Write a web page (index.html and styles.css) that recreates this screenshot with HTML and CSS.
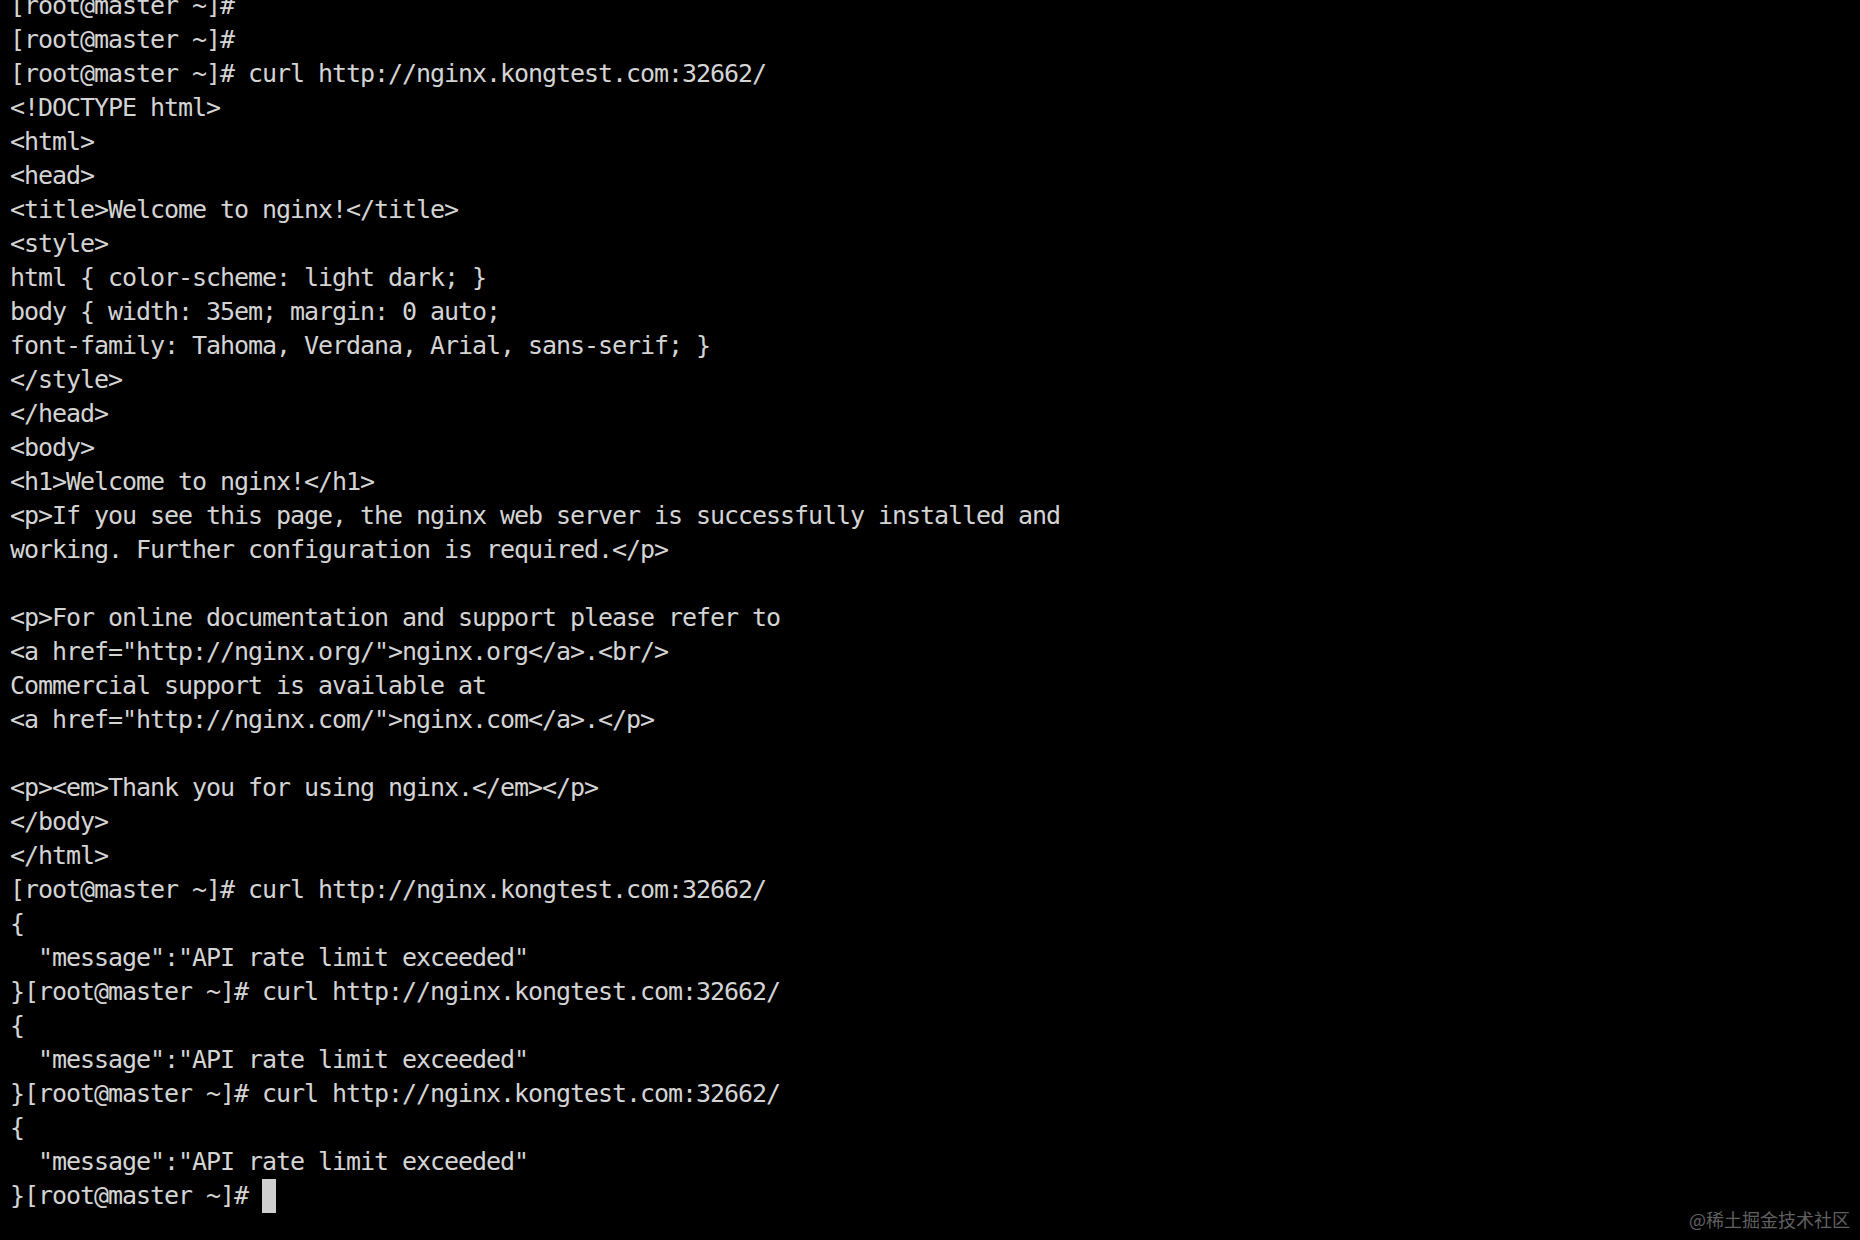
FILE: index.html
```html
<!DOCTYPE html>
<html>
<head>
<meta charset="utf-8">
<link rel="stylesheet" href="styles.css">
</head>
<body>
<div class="term">
<pre class="out">[root@master ~]#
[root@master ~]#
[root@master ~]# curl http://nginx.kongtest.com:32662/
&lt;!DOCTYPE html&gt;
&lt;html&gt;
&lt;head&gt;
&lt;title&gt;Welcome to nginx!&lt;/title&gt;
&lt;style&gt;
html { color-scheme: light dark; }
body { width: 35em; margin: 0 auto;
font-family: Tahoma, Verdana, Arial, sans-serif; }
&lt;/style&gt;
&lt;/head&gt;
&lt;body&gt;
&lt;h1&gt;Welcome to nginx!&lt;/h1&gt;
&lt;p&gt;If you see this page, the nginx web server is successfully installed and
working. Further configuration is required.&lt;/p&gt;

&lt;p&gt;For online documentation and support please refer to
&lt;a href="http://nginx.org/"&gt;nginx.org&lt;/a&gt;.&lt;br/&gt;
Commercial support is available at
&lt;a href="http://nginx.com/"&gt;nginx.com&lt;/a&gt;.&lt;/p&gt;

&lt;p&gt;&lt;em&gt;Thank you for using nginx.&lt;/em&gt;&lt;/p&gt;
&lt;/body&gt;
&lt;/html&gt;
[root@master ~]# curl http://nginx.kongtest.com:32662/
{
  "message":"API rate limit exceeded"
}[root@master ~]# curl http://nginx.kongtest.com:32662/
{
  "message":"API rate limit exceeded"
}[root@master ~]# curl http://nginx.kongtest.com:32662/
{
  "message":"API rate limit exceeded"
}[root@master ~]# <span class="cursor"></span></pre>
</div>
<div class="watermark">@稀土掘金技术社区</div>
</body>
</html>
```
FILE: styles.css
```css
html, body {
  margin: 0;
  padding: 0;
  background: #000;
  height: 100%;
  overflow: hidden;
}
.term {
  padding-left: 10px;
  margin-top: -11px;
}
.out {
  margin: 0;
  font-family: "DejaVu Sans Mono", "Liberation Mono", monospace;
  font-size: 25px;
  letter-spacing: -1.05px;
  line-height: 34px;
  color: #d4d4d4;
  white-space: pre;
}
.cursor {
  display: inline-block;
  width: 14px;
  height: 34px;
  background: #cfcfcf;
  vertical-align: top;
}
.watermark {
  position: absolute;
  right: 10px;
  bottom: 8px;
  font-family: "Noto Sans CJK SC", sans-serif;
  font-size: 18px;
  color: #606060;
}
```
